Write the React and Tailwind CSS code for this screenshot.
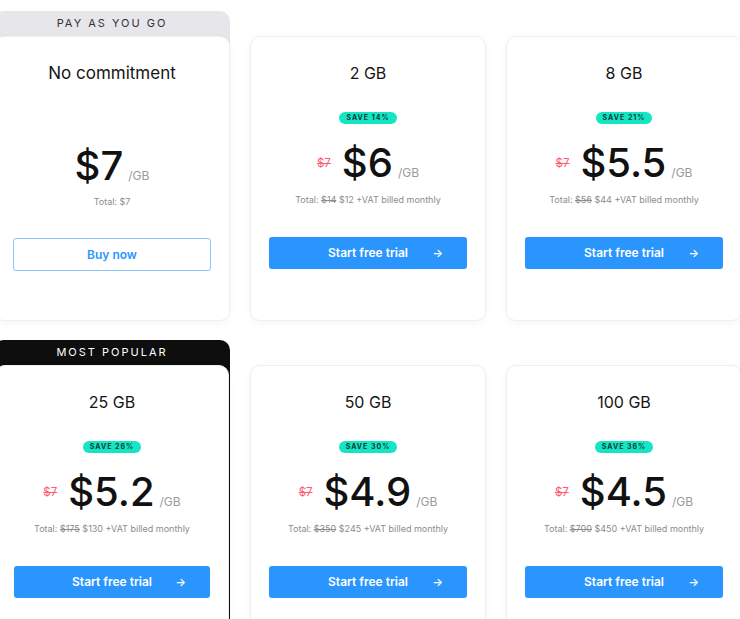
import React from 'react'

const plans = [
	{ title: "2 GB", save: "14%", price: "$6", old: "$14", total: "$12" },
	{ title: "8 GB", save: "21%", price: "$5.5", old: "$56", total: "$44" },
	{ title: "25 GB", save: "26%", price: "$5.2", old: "$175", total: "$130", popular: true },
	{ title: "50 GB", save: "30%", price: "$4.9", old: "$350", total: "$245" },
	{ title: "100 GB", save: "36%", price: "$4.5", old: "$700", total: "$450" },
];

const sans = "font-['Inter','Liberation_Sans',sans-serif]";

function Price({ value, old }) {
	return (
		<div className="flex items-end justify-center">
			{old && (
				<span className="text-[11.5px] text-[#ff5a72] line-through mb-[13px] mr-[11px]">$7</span>
			)}
			<span className="text-[40px] leading-[44px] font-medium text-[#111]">{value}</span>
			<span className="text-[12px] text-[#9a9a9a] ml-[5px] mb-[3px]">/GB</span>
		</div>
	);
}

function Card({ plan }) {
	return (
		<div className="h-[285px] bg-white rounded-[10px] border border-[#efefef] shadow-[0_2px_8px_rgba(0,0,0,0.04)] px-[18px] pt-[26px] flex flex-col">
			<h2 className="text-center text-[16px] text-[#151515] leading-[20px]">{plan.title}</h2>
			<div className="flex justify-center mt-[29px]">
				<span className="bg-[#14e6c4] rounded-full px-[7px] h-[12px] leading-[12px] text-[7px] font-bold tracking-[1px] text-[#0f3b34]">
					SAVE {plan.save}
				</span>
			</div>
			<div className="mt-[17px]">
				<Price value={plan.price} old />
			</div>
			<p className="text-center text-[9px] text-[#8c8c8c] mt-[8px] leading-[14px]">
				Total: <span className="line-through">{plan.old}</span> {plan.total} +VAT billed monthly
			</p>
			<button className="relative mt-[30px] h-[32px] w-full bg-[#2b95fe] rounded-[3px] text-white text-[12px] font-semibold">
				Start free trial
				<span className="absolute right-[24px] top-0 leading-[32px] text-[11px]">→</span>
			</button>
		</div>
	);
}

export default function App() {
	return (
		<div className={`w-[740px] h-[619px] overflow-hidden bg-white ${sans}`}>
			<div className="ml-[-6px] pt-[11px] grid grid-cols-[236px_236px_236px] gap-x-[20px] gap-y-[19px]">
				{/* pay as you go */}
				<div className="flex flex-col">
					<div className="h-[35px] bg-[#e7e7eb] rounded-t-[10px] text-center text-[11px] tracking-[2px] text-[#333] leading-[25px]">
						PAY AS YOU GO
					</div>
					<div className="-mt-[10px] h-[285px] bg-white rounded-[10px] border border-[#efefef] shadow-[0_2px_8px_rgba(0,0,0,0.04)] px-[18px] pt-[26px] flex flex-col">
						<h2 className="text-center text-[17px] text-[#151515] leading-[20px]">No commitment</h2>
						<div className="mt-[61px]">
							<div className="flex items-end justify-center">
								<span className="text-[40px] leading-[44px] font-medium text-[#111]">$7</span>
								<span className="text-[12px] text-[#9a9a9a] ml-[5px] mb-[3px]">/GB</span>
							</div>
						</div>
						<p className="text-center text-[9px] text-[#8c8c8c] mt-[7px] leading-[14px]">Total: $7</p>
						<button className="mt-[29px] h-[33px] w-full border border-[#8cc6ff] text-[#2b95fe] rounded-[3px] text-[12px] font-semibold">
							Buy now
						</button>
					</div>
				</div>

				{plans.map((p) =>
					p.popular ? (
						<div key={p.title} className="flex flex-col bg-[#0e0e0f] rounded-[10px] px-[1px]">
							<div className="h-[25px] text-center text-[11px] tracking-[2px] text-white leading-[25px]">
								MOST POPULAR
							</div>
							<Card plan={p} />
						</div>
					) : (
						<div key={p.title} className="flex flex-col">
							<div className="h-[25px]" />
							<Card plan={p} />
						</div>
					)
				)}
			</div>
		</div>
	);
}
